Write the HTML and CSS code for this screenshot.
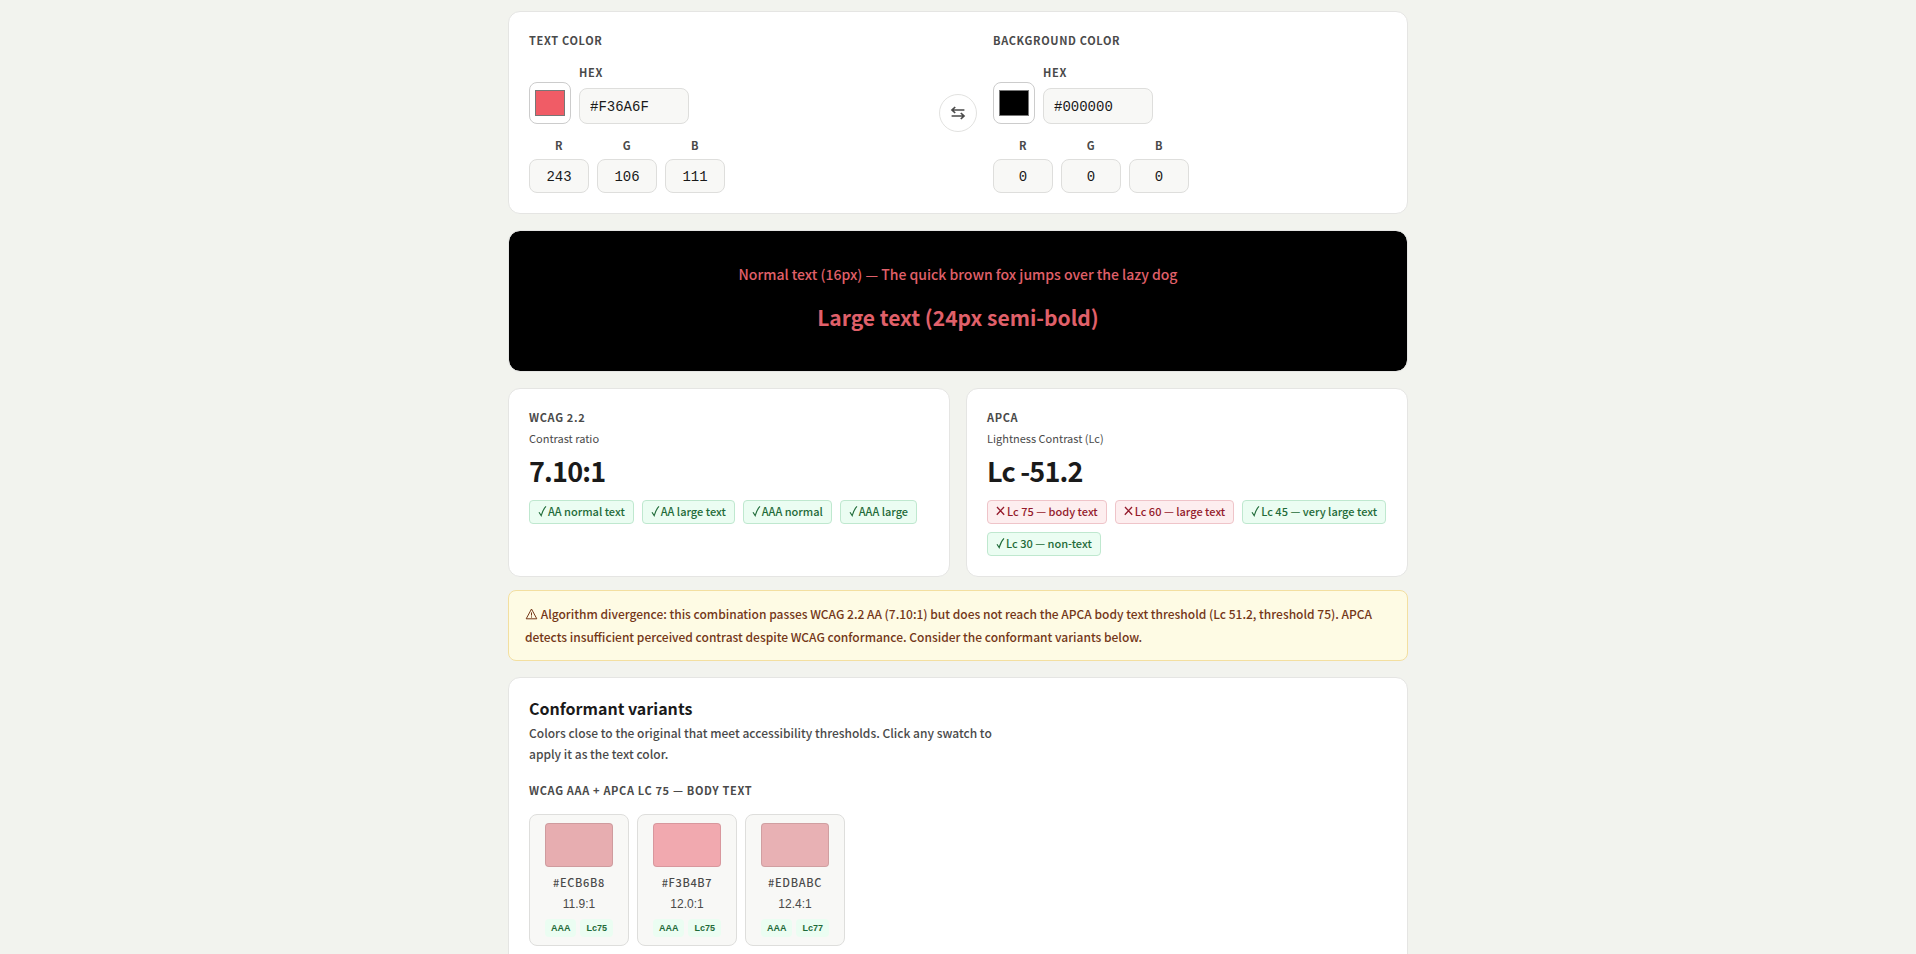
FILE: index.html
```
<!DOCTYPE html>
<html lang="en">
<head>
  <meta charset="UTF-8" />
  <meta name="viewport" content="width=device-width, initial-scale=1.0"/>
  <title>Contrast checker</title>
  <link rel="stylesheet" href="styles.css">
</head>
<body>
  <svg class="sprite" aria-hidden="true">
    <symbol id="check" viewBox="0 0 9 12">
      <path d="M1 7.2 L3.2 10.6 C4.2 7 5.8 3.6 8 1.4" fill="none" stroke="currentColor" stroke-width="1.1"/>
    </symbol>
    <symbol id="cross" viewBox="0 0 9 12">
      <path d="M1 2 L8.2 9.8 M8 2 L.8 9.8" fill="none" stroke="currentColor" stroke-width="1.3"/>
    </symbol>
  </svg>

  <main class="container">
    <form class="card picker">
      <fieldset class="color-group">
        <legend class="section-title">Text color</legend>
        <div class="hex-row">
          <input type="color" class="color-input" id="textColor" value="#f05c66" aria-label="Pick text color">
          <div class="field">
            <label for="textHex">Hex</label>
            <input type="text" class="hex-input" id="textHex" value="#F36A6F" maxlength="7">
          </div>
        </div>
        <div class="rgb-row">
          <div class="field">
            <label for="textR">R</label>
            <input type="text" class="rgb-input" id="textR" value="243">
          </div>
          <div class="field">
            <label for="textG">G</label>
            <input type="text" class="rgb-input" id="textG" value="106">
          </div>
          <div class="field">
            <label for="textB">B</label>
            <input type="text" class="rgb-input" id="textB" value="111">
          </div>
        </div>
      </fieldset>

      <button type="button" class="swap" aria-label="Swap colors">
        <svg width="16" height="16" viewBox="0 0 16 16" fill="none" stroke="currentColor" stroke-width="1.7" aria-hidden="true">
          <path d="M14.4 5 H2 M5.2 2 L2 5 L5.2 8"/>
          <path d="M1.6 11 H14 M10.8 8 L14 11 L10.8 14"/>
        </svg>
      </button>

      <fieldset class="color-group">
        <legend class="section-title">Background color</legend>
        <div class="hex-row">
          <input type="color" class="color-input" id="bgColor" value="#000000" aria-label="Pick background color">
          <div class="field">
            <label for="bgHex">Hex</label>
            <input type="text" class="hex-input" id="bgHex" value="#000000" maxlength="7">
          </div>
        </div>
        <div class="rgb-row">
          <div class="field">
            <label for="bgR">R</label>
            <input type="text" class="rgb-input" id="bgR" value="0">
          </div>
          <div class="field">
            <label for="bgG">G</label>
            <input type="text" class="rgb-input" id="bgG" value="0">
          </div>
          <div class="field">
            <label for="bgB">B</label>
            <input type="text" class="rgb-input" id="bgB" value="0">
          </div>
        </div>
      </fieldset>
    </form>

    <section class="preview">
      <p class="preview-normal">Normal text (16px) — The quick brown fox jumps over the lazy dog</p>
      <p class="preview-large">Large text (24px semi-bold)</p>
    </section>

    <div class="results">
      <section class="card">
        <h2 class="section-title">WCAG 2.2</h2>
        <p class="metric">Contrast ratio</p>
        <p class="score">7.10:1</p>
        <ul class="tags">
          <li class="tag pass"><svg class="mark"><use href="#check"/></svg>AA normal text</li>
          <li class="tag pass"><svg class="mark"><use href="#check"/></svg>AA large text</li>
          <li class="tag pass"><svg class="mark"><use href="#check"/></svg>AAA normal</li>
          <li class="tag pass"><svg class="mark"><use href="#check"/></svg>AAA large</li>
        </ul>
      </section>
      <section class="card">
        <h2 class="section-title">APCA</h2>
        <p class="metric">Lightness Contrast (Lc)</p>
        <p class="score">Lc -51.2</p>
        <ul class="tags">
          <li class="tag fail"><svg class="mark"><use href="#cross"/></svg>Lc 75 — body text</li>
          <li class="tag fail"><svg class="mark"><use href="#cross"/></svg>Lc 60 — large text</li>
          <li class="tag pass"><svg class="mark"><use href="#check"/></svg>Lc 45 — very large text</li>
          <li class="tag pass"><svg class="mark"><use href="#check"/></svg>Lc 30 — non-text</li>
        </ul>
      </section>
    </div>

    <p class="notice"><svg class="warn" viewBox="0 0 12 12" fill="none" stroke="currentColor" aria-hidden="true"><path d="M6 1 L11.3 10.8 H.7 Z" stroke-linejoin="round"/><path d="M6 4.4 V7.6 M6 8.4 V9.6"/></svg> Algorithm divergence: this combination passes WCAG 2.2 AA (7.10:1) but does not reach the APCA body text threshold (Lc 51.2, threshold 75). APCA detects insufficient perceived contrast despite WCAG conformance. Consider the conformant variants below.</p>

    <section class="card variants">
      <h2 class="variants-title">Conformant variants</h2>
      <p class="variants-text">Colors close to the original that meet accessibility thresholds. Click any swatch to apply it as the text color.</p>
      <h3 class="section-title">WCAG AAA + APCA Lc 75 — body text</h3>
      <div class="swatches">
        <button type="button" class="variant">
          <span class="swatch" style="background: #e7adb0"></span>
          <span class="variant-hex">#ECB6B8</span>
          <span class="variant-ratio">11.9:1</span>
          <span class="badges"><span class="badge">AAA</span><span class="badge">Lc75</span></span>
        </button>
        <button type="button" class="variant">
          <span class="swatch" style="background: #f1a9af"></span>
          <span class="variant-hex">#F3B4B7</span>
          <span class="variant-ratio">12.0:1</span>
          <span class="badges"><span class="badge">AAA</span><span class="badge">Lc75</span></span>
        </button>
        <button type="button" class="variant">
          <span class="swatch" style="background: #e8b1b4"></span>
          <span class="variant-hex">#EDBABC</span>
          <span class="variant-ratio">12.4:1</span>
          <span class="badges"><span class="badge">AAA</span><span class="badge">Lc77</span></span>
        </button>
      </div>
    </section>
  </main>
</body>
</html>
```
FILE: styles.css
```
* {
  margin: 0;
  padding: 0;
  box-sizing: border-box;
}

body {
  background: #f2f3ee;
  color: #1a1a1a;
  font-family: "Noto Sans CJK SC", "Noto Sans", sans-serif;
  font-size: 12px;
  padding: 11px 16px 32px;
}

.sprite {
  display: none;
}

.container {
  max-width: 900px;
  margin: 0 auto;
}

.card {
  background: #fff;
  border: 1px solid #e5e5e3;
  border-radius: 12px;
  padding: 20px;
}

.section-title {
  font-size: 11px;
  font-weight: 600;
  line-height: 16px;
  letter-spacing: 0.06em;
  text-transform: uppercase;
  color: #4a4a4a;
}

/* color pickers */
.picker {
  display: grid;
  grid-template-columns: 1fr auto 1fr;
  align-items: center;
  gap: 16px;
}

.color-group {
  border: none;
  min-width: 0;
}

.color-group .section-title {
  margin-bottom: 16px;
}

.hex-row {
  display: flex;
  align-items: flex-end;
  gap: 8px;
  margin-bottom: 13px;
}

.rgb-row {
  display: flex;
  gap: 8px;
}

.field {
  display: flex;
  flex-direction: column;
  gap: 7px;
}

.rgb-row .field {
  gap: 5px;
}

.field label {
  font-size: 11px;
  font-weight: 600;
  line-height: 17px;
  letter-spacing: 0.06em;
  text-transform: uppercase;
  color: #4a4a4a;
}

.rgb-row label {
  text-align: center;
}

.color-input {
  width: 42px;
  height: 42px;
  padding: 3px;
  background: #fff;
  border: 1px solid #ccc;
  border-radius: 8px;
  cursor: pointer;
}

.hex-input,
.rgb-input {
  font-family: "Liberation Mono", monospace;
  font-size: 14px;
  color: #1a1a1a;
  background: #f8f8f6;
  border: 1px solid #dededc;
  border-radius: 8px;
}

.hex-input {
  width: 110px;
  height: 36px;
  padding: 1px 10px 0;
}

.rgb-input {
  width: 60px;
  height: 34px;
  padding-top: 2px;
  text-align: center;
}

.swap {
  display: flex;
  align-items: center;
  justify-content: center;
  width: 38px;
  height: 38px;
  background: #fff;
  border: 1px solid #e2e2e0;
  border-radius: 50%;
  color: #4a4a4a;
  cursor: pointer;
}

/* preview */
.preview {
  margin-top: 16px;
  padding: 32px;
  background: #000;
  border: 1px solid #e5e5e3;
  border-radius: 12px;
  background-clip: padding-box;
  color: #e0606a;
  text-align: center;
}

.preview-normal {
  font-size: 14px;
  font-weight: 500;
  line-height: 23px;
  margin-bottom: 13px;
}

.preview-large {
  font-size: 21px;
  font-weight: 600;
  line-height: 36px;
  margin-bottom: 4px;
}

/* results */
.results {
  display: grid;
  grid-template-columns: 1fr 1fr;
  gap: 16px;
  margin-top: 16px;
}

.metric {
  font-size: 11px;
  line-height: 18px;
  margin-top: 4px;
  color: #4a4a4a;
}

.score {
  font-size: 27px;
  font-weight: 700;
  line-height: 36px;
  margin: 6px 0 11px;
  letter-spacing: -0.03em;
}

.tags {
  display: flex;
  flex-wrap: wrap;
  gap: 8px;
  list-style: none;
}

.tag {
  display: flex;
  align-items: center;
  gap: 1px;
  padding: 0 8px 2px;
  font-size: 11px;
  font-weight: 500;
  line-height: 20px;
  border: 1px solid;
  border-radius: 4px;
}

.mark {
  width: 9px;
  height: 12px;
}

.pass {
  background: #ebfdf2;
  border-color: #bfe8cf;
  color: #1f6b39;
}

.fail {
  gap: 2px;
  background: #fdeeef;
  border-color: #efc4c9;
  color: #941b2c;
}

.notice {
  margin-top: 13px;
  padding: 11px 16px 12px;
  background: #fefbe4;
  border: 1px solid #f3dfa0;
  border-radius: 8px;
  color: #743718;
  font-weight: 500;
  line-height: 23px;
}

.warn {
  width: 13px;
  height: 12px;
  vertical-align: -1px;
}

/* variants */
.variants {
  margin-top: 16px;
}

.variants-title {
  font-size: 16px;
  font-weight: 600;
  line-height: 20px;
  margin-bottom: 4px;
}

.variants-text {
  max-width: 480px;
  font-weight: 500;
  line-height: 21px;
  color: #4a4a4a;
  margin-bottom: 18px;
}

.swatches {
  display: flex;
  flex-wrap: wrap;
  gap: 8px;
  margin-top: 16px;
}

.variant {
  display: flex;
  flex-direction: column;
  align-items: center;
  width: 100px;
  padding: 8px;
  background: #f8f8f6;
  border: 1px solid #dededc;
  border-radius: 8px;
  color: #4a4a4a;
  cursor: pointer;
}

.swatch {
  width: 68px;
  height: 44px;
  border: 1px solid rgba(0, 0, 0, 0.1);
  border-radius: 4px;
}

.variant-hex {
  margin-top: 5px;
  font-family: "Noto Sans CJK SC", "Noto Sans", sans-serif;
  font-size: 11px;
  font-weight: 500;
  line-height: 20px;
  letter-spacing: 0.06em;
}

.variant-ratio {
  font-family: "Liberation Sans", Arial, sans-serif;
  font-size: 12px;
  line-height: 24px;
}

.badges {
  display: flex;
  gap: 4px;
  margin-top: 3px;
}

.badge {
  padding: 0 6px;
  background: #ebfdf2;
  border-radius: 4px;
  color: #1f6b39;
  font-family: "Liberation Sans", Arial, sans-serif;
  font-size: 9px;
  font-weight: 700;
  line-height: 18px;
}
```
